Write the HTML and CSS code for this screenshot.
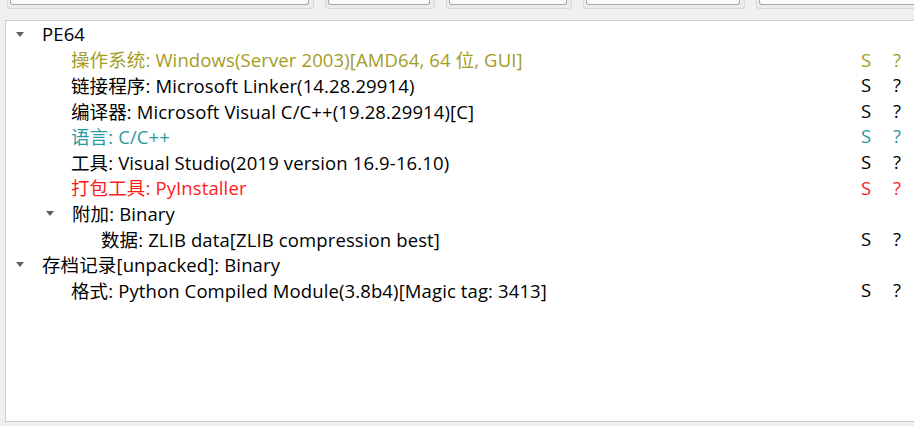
FILE: index.html
```html
<!DOCTYPE html>
<html>
<head>
<meta charset="utf-8">
<link rel="stylesheet" href="styles.css">
</head>
<body>
<div class="toolbar">
  <div class="frame f1"><div class="btn"></div></div>
  <div class="frame f2"><div class="btn"></div></div>
  <div class="frame f3"><div class="btn"></div></div>
  <div class="frame f4"><div class="btn"></div></div>
  <div class="frame f5"><div class="btn"></div></div>
</div>
<div class="tree">
  <div class="row"><span class="tw"><span class="arrow"></span></span><span class="label">PE64</span></div>
  <div class="row olive l1"><span class="label">操作系统: Windows(Server 2003)[AMD64, 64 位, GUI]</span><span class="s">S</span><span class="q">?</span></div>
  <div class="row l1"><span class="label">链接程序: Microsoft Linker(14.28.29914)</span><span class="s">S</span><span class="q">?</span></div>
  <div class="row l1"><span class="label">编译器: Microsoft Visual C/C++(19.28.29914)[C]</span><span class="s">S</span><span class="q">?</span></div>
  <div class="row teal l1"><span class="label">语言: C/C++</span><span class="s">S</span><span class="q">?</span></div>
  <div class="row l1"><span class="label">工具: Visual Studio(2019 version 16.9-16.10)</span><span class="s">S</span><span class="q">?</span></div>
  <div class="row red l1"><span class="label">打包工具: PyInstaller</span><span class="s">S</span><span class="q">?</span></div>
  <div class="row i1"><span class="tw"><span class="arrow"></span></span><span class="label">附加: Binary</span></div>
  <div class="row l2"><span class="label">数据: ZLIB data[ZLIB compression best]</span><span class="s">S</span><span class="q">?</span></div>
  <div class="row"><span class="tw"><span class="arrow"></span></span><span class="label">存档记录[unpacked]: Binary</span></div>
  <div class="row l1"><span class="label">格式: Python Compiled Module(3.8b4)[Magic tag: 3413]</span><span class="s">S</span><span class="q">?</span></div>
</div>
</body>
</html>
```
FILE: styles.css
```css
html, body {
  margin: 0;
  padding: 0;
  background: #f0f0f0;
  overflow: hidden;
}
body {
  width: 914px;
  height: 426px;
  font-family: "Segoe UI", "Open Sans", "Noto Sans CJK SC", sans-serif;
  font-size: 18.5px;
  letter-spacing: 0.12px;
  color: #000;
}
.toolbar {
  display: flex;
  height: 20px;
  margin-top: -11px;
  margin-bottom: 11px;
  padding-left: 7px;
  gap: 11px;
}
.frame {
  flex: none;
  height: 20px;
  border: 1px solid #d6d6d6;
  border-top: none;
  border-radius: 0 0 4px 4px;
  background: #ececec;
  padding: 0 4px 4px 2px;
  box-sizing: border-box;
}
.btn {
  height: 16px;
  background: #fbfbfb;
  border: 1px solid #a8a8a8;
  border-top: none;
  border-radius: 0 0 3px 3px;
  box-sizing: border-box;
}
.f1 { width: 307px; }
.f2 { width: 110px; }
.f3 { width: 126px; }
.f4 { width: 162px; }
.f5 { width: 170px; }
.tree {
  margin-left: 5px;
  width: 930px;
  height: 402px;
  box-sizing: border-box;
  background: #fff;
  border: 1px solid #cacaca;
}
.row {
  display: flex;
  align-items: center;
  height: 25.6px;
  white-space: nowrap;
  position: relative;
}
.row .label { flex: none; }
.tw {
  width: 36px;
  padding-left: 10px;
  box-sizing: border-box;
  display: flex;
  align-items: center;
  flex: none;
}
.arrow {
  width: 0;
  height: 0;
  border-left: 4px solid transparent;
  border-right: 4px solid transparent;
  border-top: 5px solid #606060;
  margin-top: 1px;
}
.i1 { padding-left: 30px; }
.l1 { padding-left: 65px; }
.l2 { padding-left: 95px; }
.s, .q {
  position: absolute;
  top: 0;
  line-height: 25.6px;
}
.s { left: 855px; }
.q { left: 887px; }
.olive { color: #a39c1f; }
.teal { color: #2a9a9f; }
.red { color: #ff1a1a; }
```
